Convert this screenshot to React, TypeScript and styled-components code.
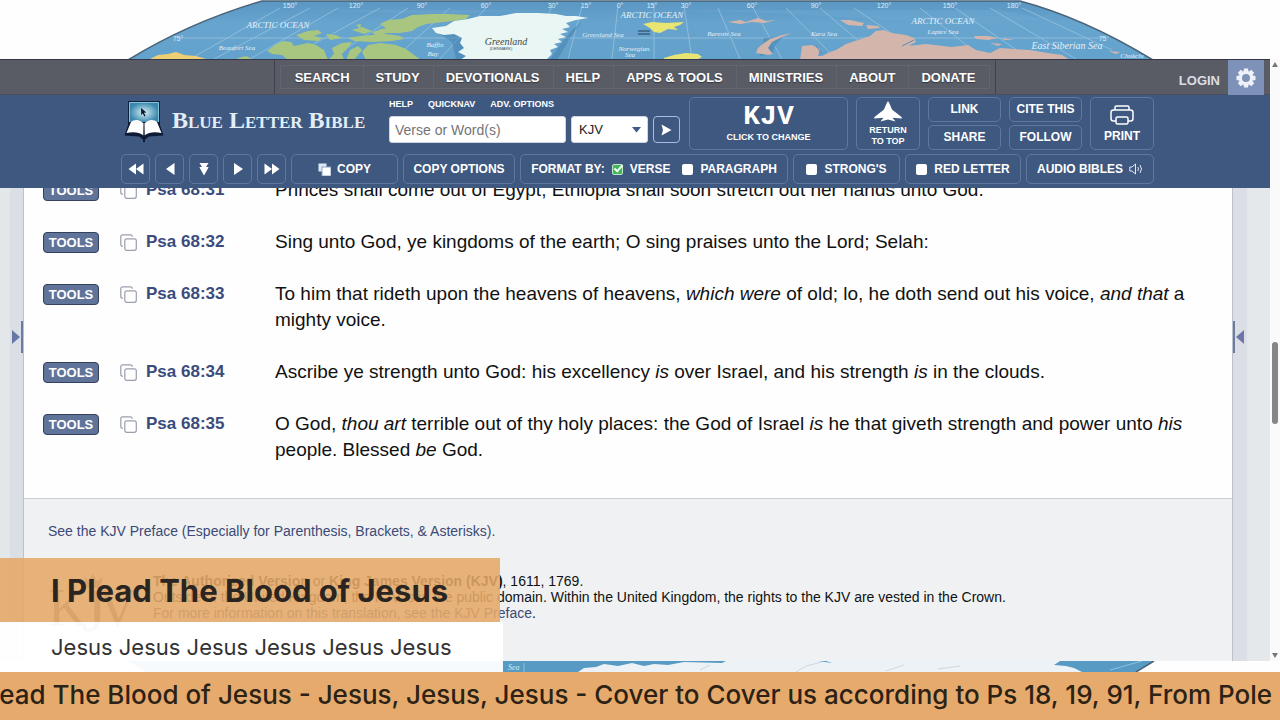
import React from "react";
import styled, { createGlobalStyle } from "styled-components";

const sans = `"Liberation Sans", Arial, sans-serif`;
const display = `Inter, "Liberation Sans", sans-serif`;

const Global = createGlobalStyle`
  *, *::before, *::after { box-sizing: border-box; }
  body { margin: 0; background: #fefefe; font-family: ${sans}; overflow: hidden; }
  button, input, select { font-family: inherit; margin: 0; }
  a { color: inherit; text-decoration: none; }
`;

const Stage = styled.div`
  position: relative;
  height: 100vh;
  display: flex;
  flex-direction: column;
  overflow: hidden;
`;

const MapBand = styled.svg<{ $h: number }>`
  display: block;
  flex: none;
  width: 100%;
  height: ${(p) => p.$h}px;
`;

const Browser = styled.div`
  flex: 1;
  min-height: 0;
  display: flex;
`;

const Page = styled.div`
  flex: 1;
  min-width: 0;
  display: flex;
  flex-direction: column;
  background: #e5e8eb;
`;

/* ---------- navigation ---------- */

const NavBar = styled.nav`
  flex: none;
  height: 36px;
  display: grid;
  grid-template-columns: 1fr auto 1fr;
  background: #595b65;
  border-top: 1px solid #34374a;
  border-bottom: 1px solid #4b4e5c;
`;

const MenuFrame = styled.div`
  grid-column: 2;
  padding: 5px;
  border: solid #3f414c;
  border-width: 0 1px;
`;

const Menu = styled.ul`
  display: flex;
  height: 24px;
  margin: 0;
  padding: 0 1px;
  list-style: none;
  border: 1px solid #64666f;
`;

const MenuItem = styled.li`
  display: flex;
  align-items: center;
  padding: 0 13px;
  font-size: 13px;
  font-weight: 700;
  color: #fff;
  text-shadow: 0 1px 1px #33353f;
  & + & { border-left: 1px solid #62646d; padding-left: 12px; }
`;

const Account = styled.div`
  display: flex;
  justify-content: flex-end;
  align-items: stretch;
  gap: 8px;
  padding-right: 6px;
`;

const Login = styled.a`
  align-self: flex-end;
  font-size: 13px;
  line-height: 15px;
  padding-bottom: 6px;
  font-weight: 700;
  color: #dcdde2;
`;

const Settings = styled.button`
  width: 36px;
  border: 0;
  padding: 0;
  margin-bottom: -1px;
  background: #7e92b9;
  display: grid;
  place-items: center;
`;

/* ---------- toolbar ---------- */

const Toolbar = styled.header`
  flex: none;
  background: #3e587f;
  height: 93px;
`;

const ToolbarInner = styled.div`
  max-width: 1038px;
  margin: 0 auto;
  padding: 2px 0 4px 5px;
  height: 100%;
  display: flex;
  flex-direction: column;
  justify-content: space-between;
`;

const TopRow = styled.div`
  display: flex;
  height: 53px;
  gap: 8px;
`;

const Brand = styled.a`
  display: flex;
  align-items: center;
  gap: 8px;
  width: 260px;
  padding: 0 0 5px 3px;
`;

const BrandName = styled.span`
  font-family: "Liberation Serif", serif;
  font-variant: small-caps;
  font-weight: 700;
  font-size: 24px;
  line-height: 24px;
  padding-bottom: 2px;
  white-space: nowrap;
  color: #e2edf8;
`;

const Search = styled.form`
  width: 292px;
  display: flex;
  flex-direction: column;
  gap: 6px;
  padding-top: 2px;
`;

const QuickLinks = styled.div`
  display: flex;
  gap: 15px;
  font-size: 9px;
  line-height: 11px;
  font-weight: 700;
  color: #fff;
`;

const SearchFields = styled.div`
  display: flex;
  gap: 5px;
  height: 27px;
`;

const Query = styled.input`
  width: 177px;
  border: 1px solid #cfd6e2;
  border-radius: 3px;
  background: #fff;
  padding: 0 5px;
  font-size: 14px;
  &::placeholder { color: #757575; opacity: 1; }
`;

const SelectWrap = styled.div`
  position: relative;
  width: 77px;
`;

const Version = styled.select`
  appearance: none;
  width: 100%;
  height: 100%;
  border: 1px solid #cfd6e2;
  border-radius: 3px;
  background: #fff;
  color: #222;
  padding: 0 7px;
  font-size: 13px;
`;

const Caret = styled.svg`
  position: absolute;
  right: 7px;
  top: 11px;
  pointer-events: none;
`;

const Go = styled.button`
  width: 27px;
  border: 1px solid #a9bbe0;
  border-radius: 4px;
  background: transparent;
  padding: 0;
  display: grid;
  place-items: center;
`;

const Box = styled.button<{ $w: number }>`
  width: ${(p) => p.$w}px;
  flex: none;
  display: flex;
  align-items: center;
  justify-content: center;
  gap: 6px;
  padding: 0;
  border: 1px solid #5f779f;
  border-radius: 5px;
  background: transparent;
  color: #fff;
  font-size: 12px;
  line-height: 14px;
  font-weight: 700;
  white-space: nowrap;
`;

const TallBox = styled(Box)<{ $small?: boolean }>`
  flex-direction: column;
  gap: ${(p) => (p.$small ? 3 : 4)}px;
  font-size: ${(p) => (p.$small ? 9 : 12)}px;
  line-height: ${(p) => (p.$small ? 11 : 14)}px;
`;

const VersionName = styled.span`
  font-family: "Liberation Mono", monospace;
  font-size: 28px;
  line-height: 24px;
`;

const Pair = styled.div`
  display: flex;
  flex-direction: column;
  gap: 3px;
  & > button { flex: 1; padding-bottom: 2px; }
`;

const BottomRow = styled.div`
  display: flex;
  gap: 5px;
  height: 30px;
`;

const Options = styled.div<{ $w: number }>`
  width: ${(p) => p.$w}px;
  flex: none;
  display: flex;
  align-items: center;
  justify-content: center;
  gap: 12px;
  border: 1px solid #5f779f;
  border-radius: 5px;
  color: #fff;
  font-size: 12px;
  font-weight: 700;
  white-space: nowrap;
`;

const Choice = styled.label`
  display: flex;
  align-items: center;
  gap: 7px;
`;

const FormatGroup = styled.span`
  display: flex;
  align-items: center;
  gap: 7px;
`;

const Tick = styled.input`
  appearance: none;
  position: relative;
  width: 11px;
  height: 11px;
  border-radius: 2px;
  background: #fff;
  &:checked { background: #45b45c; border: 1px solid #bfeac6; }
  &:checked::after {
    content: "";
    position: absolute;
    left: 3px;
    top: -2px;
    width: 5px;
    height: 9px;
    border: solid #f2fff4;
    border-width: 0 2px 2px 0;
    transform: rotate(42deg);
  }
`;

/* ---------- scripture ---------- */

const Body = styled.div`
  flex: 1;
  min-height: 0;
  display: flex;
  overflow: hidden;
`;

const Gutter = styled.aside<{ $side: "left" | "right" }>`
  flex: none;
  width: ${(p) => (p.$side === "left" ? 24 : 38)}px;
  padding-top: 133px;
  display: flex;
  align-items: flex-start;
  justify-content: ${(p) => (p.$side === "left" ? "flex-end" : "flex-start")};
  background: ${(p) =>
    p.$side === "left"
      ? "linear-gradient(90deg, #e3e7e9 0 10px, #dadee5 10px)"
      : "linear-gradient(90deg, #dbdfe5 0 14px, #e5e8ea 14px)"};
  border: solid #bcc1cc;
  border-width: ${(p) => (p.$side === "left" ? "0 1px 0 0" : "0 0 0 1px")};
`;

const Handle = styled.button<{ $side: "left" | "right" }>`
  height: 32px;
  width: 12px;
  padding: 0;
  background: none;
  border: solid #6b7da3;
  border-width: ${(p) => (p.$side === "left" ? "0 2px 0 0" : "0 0 0 2px")};
  display: grid;
  place-items: center;
`;

const Main = styled.main`
  flex: 1;
  min-width: 0;
  background: #eff1f2;
`;

const Verses = styled.section`
  background: #fefefe;
  border-bottom: 1px solid #c9ccd3;
  padding-bottom: 9px;
  overflow: hidden;
`;

const VerseList = styled.div`
  margin-top: -11px;
`;

const VerseRow = styled.article`
  display: grid;
  grid-template-columns: 77px 155px 1fr;
  padding: 0 36px 26px 19px;
  line-height: 26px;
  font-size: 19px;
`;

const Tools = styled.button`
  justify-self: start;
  margin-top: 3px;
  width: 56px;
  height: 21px;
  padding: 0;
  border: 1px solid #34415c;
  border-radius: 4px;
  background: #60749a;
  color: #fff;
  font-size: 13px;
  line-height: 15px;
  font-weight: 700;
`;

const Reference = styled.a`
  display: flex;
  align-items: center;
  gap: 9px;
  height: 26px;
  font-size: 17px;
  font-weight: 700;
  color: #3b4b7c;
`;

const VerseText = styled.p`
  margin: 0;
  color: #111;
`;

const Notes = styled.footer`
  padding: 24px;
  font-size: 14px;
  line-height: 16px;
  color: #111;
  a { color: #3d4977; }
`;

const Copyright = styled.div`
  display: flex;
  gap: 17px;
  margin-top: 34px;
  p { margin: 0; }
`;

const TranslationMark = styled.svg`
  flex: none;
`;

/* ---------- scrollbar ---------- */

const Scrollbar = styled.div`
  flex: none;
  width: 10px;
  display: flex;
  flex-direction: column;
  align-items: center;
  padding: 3px 0;
  background: #fafafa;
`;

const Thumb = styled.div`
  width: 6px;
  height: 82px;
  margin-top: 275px;
  margin-bottom: auto;
  border-radius: 3px;
  background: #868686;
`;

/* ---------- stream overlays ---------- */

const LowerThird = styled.section`
  position: absolute;
  left: 0;
  bottom: 48px;
  width: 503px;
`;

const Title = styled.h1`
  margin: 0 3px 0 0;
  padding-left: 51px;
  height: 64px;
  line-height: 66px;
  background: rgba(229, 168, 104, 0.88);
  font-family: ${display};
  font-weight: 700;
  font-size: 31px;
  color: #2a2520;
  white-space: nowrap;
`;

const Subtitle = styled.p`
  margin: 0;
  padding-left: 51px;
  height: 50px;
  line-height: 51px;
  background: rgba(255, 255, 255, 0.95);
  font-family: ${display};
  font-weight: 400;
  font-size: 22px;
  color: #333;
  white-space: nowrap;
`;

const Ticker = styled.div`
  flex: none;
  height: 48px;
  line-height: 46px;
  overflow: hidden;
  background: #e6ab6c;
  font-family: ${display};
  font-weight: 500;
  font-size: 26px;
  color: #2c2216;
  white-space: nowrap;
`;

const TickerText = styled.div`
  margin-left: -38px;
`;

/* ---------- drawings ---------- */

const meridians: [number, number, number, number][] = [
  [280, 8, 190, 59], [310, 8, 214, 59], [338, 8, 250, 59], [380, 8, 286, 59], [408, 8, 330, 59],
  [450, 8, 394, 59], [486, 8, 440, 59], [552, 6, 530, 59], [582, 6, 568, 59], [618, 6, 612, 59],
  [654, 4, 654, 59], [684, 6, 692, 59], [718, 8, 740, 59], [752, 6, 782, 59], [786, 8, 836, 59],
  [820, 8, 880, 59], [854, 8, 930, 59], [920, 8, 984, 59], [955, 8, 1030, 59], [990, 8, 1076, 59], [1022, 8, 1112, 50],
];

const degrees: [number, string][] = [
  [290, "150°"], [356, "120°"], [422, "90°"], [486, "60°"], [553, "30°"], [586, "15°"], [620, "0°"],
  [652, "15°"], [686, "30°"], [752, "60°"], [816, "90°"], [884, "120°"], [950, "150°"], [1014, "180°"],
];

const WorldTop = () => (
  <MapBand $h={59} viewBox="0 0 1280 59" preserveAspectRatio="xMidYMin slice" role="img" aria-label="World map">
    <defs>
      <linearGradient id="sea" x1="0" x2="0" y1="0" y2="1">
        <stop offset="0" stopColor="#5a96c2" />
        <stop offset="0.4" stopColor="#68a5cf" />
        <stop offset="1" stopColor="#63a2cc" />
      </linearGradient>
      <clipPath id="globe">
        <path d="M128 60 Q190 22 262 1 H1020 Q1084 18 1153 60Z" />
      </clipPath>
    </defs>
    <g clipPath="url(#globe)">
      <rect width="1280" height="60" fill="url(#sea)" />
      <path d="M440 14 Q640 4 860 18 Q960 26 1050 20 L1000 10 H300Z" fill="#74add4" opacity="0.35" />
      <g stroke="#a9cde6" strokeWidth="1" opacity="0.6">
        {meridians.map(([a, b, c, d]) => <line key={a} x1={a} y1={b} x2={c} y2={d} />)}
        <line x1="178" y1="38" x2="1106" y2="38" />
      </g>
      <g fill="#3f7ba8" opacity="0.45">
        <path d="M433 30 L450 26 462 36 466 59 H456 L452 42Z" />
        <path d="M560 45 L572 30 582 22 570 38 558 59 H550Z" />
        <path d="M764 38 L784 36 776 44 772 54 760 56Z" />
      </g>
      <path d="M148 60 158 55 168 54 176 52 184 55 196 56 210 60Z" fill="#efcf73" />
      <g fill="#a9c681">
        <path d="M267 51 275 45 283 41 291 42 294 46 308 43 316 45 324 50 328 60 288 60 282 55 272 54Z" />
        <path d="M296 35 308 31 318 30 322 33 314 36 322 38 318 41 304 40Z" />
        <path d="M332 48 342 43 352 42 348 48 342 54 344 60 328 60 334 54Z" />
        <path d="M352 30 362 27 372 31 364 34Z M356 25 361 24 360 28Z M326 34 336 35 342 38 330 40Z" />
        <path d="M348 38 360 36 372 35 386 34 400 36 404 39 392 41 372 42 354 41Z" />
        <path d="M362 52 368 45 380 43 396 45 406 49 414 55 421 60 366 60Z" />
        <path d="M380 24 388 20 402 19 412 15 432 14 448 14 470 15 466 19 444 22 426 24 418 27 412 31 400 33 382 33 378 30 386 28Z" />
        <path d="M372 32 380 30 386 34 376 36Z M350 50 358 46 362 50 354 60 346 60Z M238 58 246 56 254 60 236 60Z" />
      </g>
      <path
        d="M432 28 446 26 454 21 468 19 480 16 500 16 516 13 538 13 556 14 566 16 576 16 588 18 576 20 566 23 570 27 562 29 568 32 560 34 566 37 558 39 562 42 554 44 558 47 550 50 552 54 546 60 460 60 466 56 458 52 464 48 460 43 462 38 454 34 444 35 436 33Z"
        fill="#eaf6f4"
      />
      <g fill="#e8e573">
        <path d="M643 24 652 22 666 23 684 22 680 25 674 27 678 30 668 29 660 33 654 32 650 28Z" />
        <path d="M664 58 674 55 686 53 698 54 702 57 696 60 664 60Z" />
      </g>
      <g fill="#d3b5ab">
        <path d="M792 33 782 35 770 39 764 43 758 48 756 53 768 55 773 54 768 48 772 42 782 37Z" />
        <path d="M728 22 740 20 746 22 758 18 766 21 776 20 764 23 752 22 740 24Z" />
        <path d="M840 20 850 20 864 23 862 26 848 25Z M866 25 878 26 880 28 868 29Z" />
        <path d="M800 60 802 46 812 45 820 49 818 56 822 56 830 52 836 50 846 44 858 40 870 36 876 31 884 30 892 33 906 35 914 38 916 42 908 46 926 44 952 47 968 45 976 50 990 53 1000 48 1014 49 1030 50 1048 53 1062 55 1070 60Z" />
        <path d="M974 36 988 36 998 38 988 40 976 39Z M990 43 1002 44 998 46Z M1108 51 1120 52 1116 54Z M1002 38 1014 40 1004 40Z" />
      </g>
      <path d="M902 46 910 42 914 40 M816 46 822 54" stroke="#5b8db0" fill="none" />
      <g fill="#dcebf6" fontFamily="Liberation Sans, sans-serif" fontSize="7" textAnchor="middle">
        {degrees.map(([x, t], i) => <text key={i} x={x} y="8">{t}</text>)}
        <text x="178" y="41">75°</text>
        <text x="1104" y="41">75°</text>
      </g>
      <g fill="#e3f0f9" fontFamily="Liberation Serif, serif" fontStyle="italic" fontSize="9" textAnchor="middle">
        <text x="278" y="28">ARCTIC  OCEAN</text>
        <text x="652" y="18">ARCTIC  OCEAN</text>
        <text x="943" y="24">ARCTIC  OCEAN</text>
        <text x="1067" y="49" fontSize="10">East Siberian Sea</text>
        <g fontSize="7">
          <text x="237" y="50">Beaufort Sea</text>
          <text x="435" y="47">Baffin</text>
          <text x="433" y="56">Bay</text>
          <text x="603" y="37">Greenland  Sea</text>
          <text x="634" y="51">Norwegian</text>
          <text x="630" y="57">Sea</text>
          <text x="724" y="36">Barents Sea</text>
          <text x="824" y="36">Kara Sea</text>
          <text x="943" y="34">Laptev Sea</text>
          <text x="1132" y="58">Chukchi</text>
        </g>
      </g>
      <g fill="#3d4a4d" textAnchor="middle">
        <text x="506" y="45" fontFamily="Liberation Serif, serif" fontStyle="italic" fontSize="10">Greenland</text>
        <text x="501" y="50" fontFamily="Liberation Sans, sans-serif" fontSize="4">(DENMARK)</text>
      </g>
      <path d="M638 31H650M638 34H650" stroke="#3a607c" strokeWidth="1.5" />
    </g>
    <path d="M128 60 Q190 22 262 1 H1020 Q1084 18 1153 60" fill="none" stroke="#4a6478" strokeWidth="1.6" />
  </MapBand>
);

const WorldBottom = () => (
  <MapBand $h={11} viewBox="0 0 1280 11" preserveAspectRatio="xMidYMin slice" aria-hidden="true">
    <path d="M128 0 H1154 L1136 11 H146Z" fill="#579bc4" />
    <path
      d="M578 11 584 7 596 6 604 3 618 5 632 2 644 5 654 3 668 4 684 1 722 2 726 0 818 0 832 2 826 0 1060 0 1054 4 1066 5 1074 7 1082 11Z"
      fill="#edf2f7"
    />
    <path d="M796 11 806 5 822 1 M700 9 710 4 M886 10 904 4 M938 8 960 5" stroke="#ccd8e5" fill="none" />
    <path d="M1110 9 1142 0 M524 2V11" stroke="#8fc0dc" fill="none" />
    <path d="M1154 0 1136 11" stroke="#4a6478" strokeWidth="1.5" />
    <text x="508" y="9" fontFamily="Liberation Serif, serif" fontStyle="italic" fontSize="8" fill="#d5e8f3">Sea</text>
  </MapBand>
);

const Logo = () => (
  <svg width="40" height="42" viewBox="0 0 40 42" aria-hidden="true">
    <defs>
      <radialGradient id="screen">
        <stop offset="0" stopColor="#d9f1f6" />
        <stop offset="1" stopColor="#3a88ae" />
      </radialGradient>
    </defs>
    <path d="M4 1h32v25H4z" fill="#12203f" />
    <path d="M5.500 2.500h29v20h-29z" fill="url(#screen)" stroke="#86c3d9" strokeWidth="1" />
    <path d="M17 8l5.500 4.500-2.500.3 1.500 3-1.200.6-1.400-3-1.700 1.500z" fill="#101a2c" />
    <path d="M5 22 0.500 35.500 15 36.500 19 39.500V42h2V39.500L25 36.500 39.500 35.500 35 22Z" fill="#0e1936" />
    <path d="M20 24C16 19 10 19 7 22L2.500 33C9 31.500 15 32 19.500 35.500Z" fill="#fff" />
    <path d="M20 24C24 19 30 19 33 22L37.500 33C31 31.500 25 32 20.500 35.500Z" fill="#fff" />
    <path d="M20 24V36" stroke="#0e1936" />
  </svg>
);

const Gear = () => (
  <svg width="22" height="22" viewBox="0 0 22 22" aria-hidden="true">
    <g fill="#eef1f8">
      {[0, 45, 90, 135].map((r) => (
        <path key={r} d="M9 1.500h4l.7 4h-5.400zM9 20.500h4l.7-4h-5.400z" transform={`rotate(${r} 11 11)`} />
      ))}
    </g>
    <circle cx="11" cy="11" r="5.500" fill="none" stroke="#eef1f8" strokeWidth="3" />
  </svg>
);

const Glyph = ({ d }: { d: string }) => (
  <svg width="18" height="14" viewBox="0 0 18 14" fill="#fff" aria-hidden="true"><path d={d} /></svg>
);

const steps: [string, string][] = [
  ["Previous book", "M9 1.500V12.500L1.500 7ZM16.500 1.500V12.500L9 7Z"],
  ["Previous chapter", "M13.500 1V13L5 7Z"],
  ["Jump down", "M4.500 1H13.500L11 5H13.500L9 13.500 4.500 5H7Z M4.500 5.500H13.500L9 13.500Z"],
  ["Next chapter", "M5 1V13L14 7Z"],
  ["Next book", "M1.500 1.500V12.500L9 7ZM9 1.500V12.500L16.500 7Z"],
];

const CopySolid = () => (
  <svg width="13" height="13" viewBox="0 0 13 13" aria-hidden="true">
    <rect x="0.500" y="0.500" width="8" height="8" fill="#dfe7f3" />
    <rect x="4" y="4" width="9" height="9" fill="#fff" stroke="#8ea2c4" />
  </svg>
);

const CopyOutline = () => (
  <svg width="17" height="17" viewBox="0 0 17 17" fill="none" stroke="#9a9fae" strokeWidth="1.200" aria-hidden="true">
    <rect x="4.800" y="4.800" width="11.500" height="11.500" rx="2" />
    <path d="M2.800 12.300C1.400 12.300.8 11.500.8 10.300V2.800C.8 1.500 1.500.8 2.800.8H10.300C11.500.8 12.300 1.400 12.300 2.800" />
  </svg>
);

const Jet = () => (
  <svg width="28" height="21" viewBox="0 0 28 21" fill="#fff" aria-hidden="true">
    <path d="M14 0C15.500 2 16.500 5 18 8.500L27.500 16C28 16.800 28 17.500 27.500 17.500L18.500 16.800 21.500 20.500 14 18.500 6.500 20.500 9.500 16.800.5 17.500C0 17.500 0 16.800.5 16L10 8.500C11.500 5 12.500 2 14 0Z" />
  </svg>
);

const Printer = () => (
  <svg width="24" height="20" viewBox="0 0 24 20" fill="none" stroke="#fff" strokeWidth="1.500" strokeLinejoin="round" aria-hidden="true">
    <path d="M5 5V2.500Q5 1 6.500 1H17.500Q19 1 19 2.500V5" />
    <path d="M6 16H3.500Q1 16 1 13.500V7.500Q1 5 3.500 5H20.500Q23 5 23 7.500V13.500Q23 16 20.500 16H18" />
    <rect x="6" y="12" width="12" height="7" rx="1.500" />
  </svg>
);

const Speaker = () => (
  <svg width="14" height="12" viewBox="0 0 14 12" fill="none" stroke="#e3e9f3" strokeWidth="1" aria-hidden="true">
    <path d="M.8 4H3L6.500 1V11L3 8H.8ZM8.800 4Q10.200 6 8.800 8M11 2Q14 6 11 10" />
  </svg>
);

const KjvMark = () => (
  <TranslationMark width="88" height="64" viewBox="0 0 88 64" aria-hidden="true">
    <g fill="#85878c" fontFamily="Liberation Serif, serif">
      <text x="0" y="53" fontSize="54">K</text>
      <text x="34" y="58" fontSize="62">J</text>
      <text x="50" y="53" fontSize="54">V</text>
      <path d="M36 4 41 8 45 1 49 8 55 4 52 15H39Z" />
    </g>
  </TranslationMark>
);

/* ---------- content ---------- */

const menu = ["SEARCH", "STUDY", "DEVOTIONALS", "HELP", "APPS & TOOLS", "MINISTRIES", "ABOUT", "DONATE"];

const verses: [string, React.ReactNode][] = [
  ["Psa 68:31", "Princes shall come out of Egypt; Ethiopia shall soon stretch out her hands unto God."],
  ["Psa 68:32", "Sing unto God, ye kingdoms of the earth; O sing praises unto the Lord; Selah:"],
  ["Psa 68:33", <>To him that rideth upon the heavens of heavens, <em>which were</em> of old; lo, he doth send out his voice, <em>and that</em> a mighty voice.</>],
  ["Psa 68:34", <>Ascribe ye strength unto God: his excellency <em>is</em> over Israel, and his strength <em>is</em> in the clouds.</>],
  ["Psa 68:35", <>O God, <em>thou art</em> terrible out of thy holy places: the God of Israel <em>is</em> he that giveth strength and power unto <em>his</em> people. Blessed <em>be</em> God.</>],
];

export default function App() {
  return (
    <Stage>
      <Global />
      <WorldTop />
      <Browser>
        <Page>
          <NavBar>
            <MenuFrame>
              <Menu>
                {menu.map((m) => <MenuItem key={m}><a href="#">{m}</a></MenuItem>)}
              </Menu>
            </MenuFrame>
            <Account>
              <Login href="#">LOGIN</Login>
              <Settings aria-label="Settings"><Gear /></Settings>
            </Account>
          </NavBar>
          <Toolbar>
            <ToolbarInner>
              <TopRow>
                <Brand href="#"><Logo /><BrandName>Blue Letter Bible</BrandName></Brand>
                <Search>
                  <QuickLinks>
                    <a href="#">HELP</a><a href="#">QUICKNAV</a><a href="#">ADV. OPTIONS</a>
                  </QuickLinks>
                  <SearchFields>
                    <Query placeholder="Verse or Word(s)" aria-label="Verse or Word(s)" />
                    <SelectWrap>
                      <Version aria-label="Version"><option>KJV</option></Version>
                      <Caret width="9" height="6" viewBox="0 0 9 6"><path d="M0 0H9L4.500 5.500Z" fill="#44588c" /></Caret>
                    </SelectWrap>
                    <Go type="button" aria-label="Go">
                      <svg width="11" height="12" viewBox="0 0 11 12"><path d="M0.500 0.500 10.500 6 0.500 11.500 2 6Z" fill="#fff" /></svg>
                    </Go>
                  </SearchFields>
                </Search>
                <TallBox $w={159} $small><VersionName>KJV</VersionName>CLICK TO CHANGE</TallBox>
                <TallBox $w={64} $small><Jet /><span>RETURN<br />TO TOP</span></TallBox>
                <Pair><Box $w={73}>LINK</Box><Box $w={73}>SHARE</Box></Pair>
                <Pair><Box $w={73}>CITE THIS</Box><Box $w={73}>FOLLOW</Box></Pair>
                <TallBox $w={64}><Printer />PRINT</TallBox>
              </TopRow>
              <BottomRow>
                {steps.map(([label, d]) => <Box key={label} $w={29} aria-label={label}><Glyph d={d} /></Box>)}
                <Box $w={107}><CopySolid />COPY</Box>
                <Box $w={112}>COPY OPTIONS</Box>
                <Options $w={268}>
                  <FormatGroup>
                    FORMAT BY:
                    <Choice><Tick type="checkbox" defaultChecked />VERSE</Choice>
                  </FormatGroup>
                  <Choice><Tick type="checkbox" />PARAGRAPH</Choice>
                </Options>
                <Options $w={107}><Choice><Tick type="checkbox" />STRONG'S</Choice></Options>
                <Options $w={116}><Choice><Tick type="checkbox" />RED LETTER</Choice></Options>
                <Box $w={128}>AUDIO BIBLES<Speaker /></Box>
              </BottomRow>
            </ToolbarInner>
          </Toolbar>
          <Body>
            <Gutter $side="left">
              <Handle $side="left" aria-label="Open left panel">
                <svg width="8" height="14" viewBox="0 0 8 14"><path d="M0 0 8 7 0 14Z" fill="#6878a6" /></svg>
              </Handle>
            </Gutter>
            <Main>
              <Verses>
                <VerseList>
                  {verses.map(([ref, text]) => (
                    <VerseRow key={ref}>
                      <Tools>TOOLS</Tools>
                      <Reference href="#"><CopyOutline />{ref}</Reference>
                      <VerseText>{text}</VerseText>
                    </VerseRow>
                  ))}
                </VerseList>
              </Verses>
              <Notes>
                <a href="#">See the KJV Preface (Especially for Parenthesis, Brackets, &amp; Asterisks).</a>
                <Copyright>
                  <KjvMark />
                  <p>
                    <b>The Authorized Version</b> or <b>King James Version (KJV)</b>, 1611, 1769.<br />
                    Outside of the United Kingdom, the KJV is in the public domain. Within the United Kingdom, the rights to the KJV are vested in the Crown.<br />
                    <a href="#">For more information on this translation, see the KJV Preface</a>.
                  </p>
                </Copyright>
              </Notes>
            </Main>
            <Gutter $side="right">
              <Handle $side="right" aria-label="Open right panel">
                <svg width="8" height="14" viewBox="0 0 8 14"><path d="M8 0 0 7 8 14Z" fill="#6e76a8" /></svg>
              </Handle>
            </Gutter>
          </Body>
        </Page>
        <Scrollbar>
          <svg width="6" height="5" viewBox="0 0 6 5"><path d="M0 5 3 0 6 5Z" fill="#777" /></svg>
          <Thumb />
          <svg width="6" height="5" viewBox="0 0 6 5"><path d="M0 0 3 5 6 0Z" fill="#777" /></svg>
        </Scrollbar>
      </Browser>
      <WorldBottom />
      <Ticker>
        <TickerText>
          I Plead The Blood of Jesus - Jesus, Jesus, Jesus - Cover to Cover us according to Ps 18, 19, 91, From Pole
        </TickerText>
      </Ticker>
      <LowerThird>
        <Title>I Plead The Blood of Jesus</Title>
        <Subtitle>Jesus Jesus Jesus Jesus Jesus Jesus</Subtitle>
      </LowerThird>
    </Stage>
  );
}
